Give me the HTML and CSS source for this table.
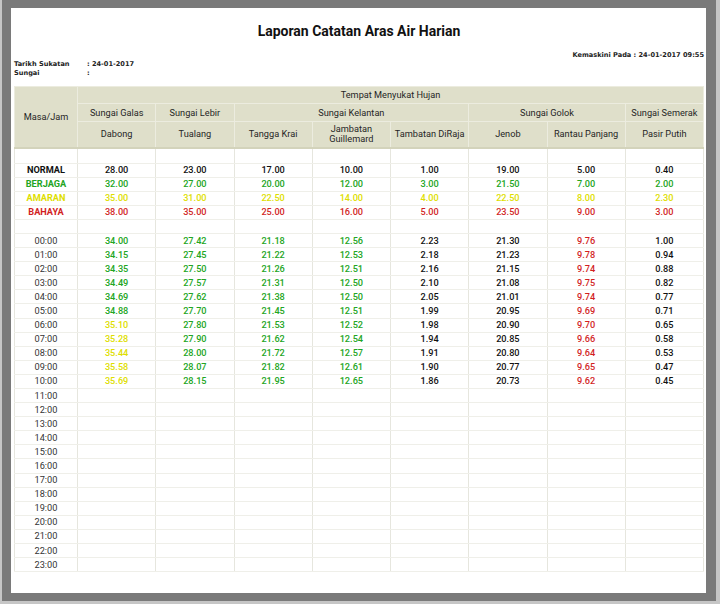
FILE: index.html
```html
<!DOCTYPE html>
<html lang="ms">
<head>
<meta charset="utf-8">
<title>Laporan Catatan Aras Air Harian</title>
<link rel="stylesheet" href="styles.css">
</head>
<body>
<div class="frame">
  <div class="page">
    <h1 class="title">Laporan Catatan Aras Air Harian</h1>
    <div class="updated">Kemaskini Pada : 24-01-2017 09:55</div>
    <div class="meta">
      <div class="meta-row"><span class="meta-label">Tarikh Sukatan</span><span>: 24-01-2017</span></div>
      <div class="meta-row"><span class="meta-label">Sungai</span><span>:</span></div>
    </div>
    <table class="report">
      <colgroup>
        <col class="c-time">
        <col><col><col><col><col><col><col><col>
      </colgroup>
      <thead>
        <tr class="h1">
          <th rowspan="3">Masa/Jam</th>
          <th colspan="8">Tempat Menyukat Hujan</th>
        </tr>
        <tr class="h2">
          <th>Sungai Galas</th>
          <th>Sungai Lebir</th>
          <th colspan="3">Sungai Kelantan</th>
          <th colspan="2">Sungai Golok</th>
          <th>Sungai Semerak</th>
        </tr>
        <tr class="h3">
          <th>Dabong</th>
          <th>Tualang</th>
          <th>Tangga Krai</th>
          <th>Jambatan<br>Guillemard</th>
          <th>Tambatan DiRaja</th>
          <th>Jenob</th>
          <th>Rantau Panjang</th>
          <th>Pasir Putih</th>
        </tr>
      </thead>
      <tbody>
        <tr class="first"><td></td><td></td><td></td><td></td><td></td><td></td><td></td><td></td><td></td></tr>
        <tr class="lvl k"><td>NORMAL</td><td>28.00</td><td>23.00</td><td>17.00</td><td>10.00</td><td>1.00</td><td>19.00</td><td>5.00</td><td>0.40</td></tr>
        <tr class="lvl g"><td>BERJAGA</td><td>32.00</td><td>27.00</td><td>20.00</td><td>12.00</td><td>3.00</td><td>21.50</td><td>7.00</td><td>2.00</td></tr>
        <tr class="lvl y"><td>AMARAN</td><td>35.00</td><td>31.00</td><td>22.50</td><td>14.00</td><td>4.00</td><td>22.50</td><td>8.00</td><td>2.30</td></tr>
        <tr class="lvl r"><td>BAHAYA</td><td>38.00</td><td>35.00</td><td>25.00</td><td>16.00</td><td>5.00</td><td>23.50</td><td>9.00</td><td>3.00</td></tr>
        <tr><td></td><td></td><td></td><td></td><td></td><td></td><td></td><td></td><td></td></tr>
        <tr><td class="t">00:00</td><td class="g">34.00</td><td class="g">27.42</td><td class="g">21.18</td><td class="g">12.56</td><td class="k">2.23</td><td class="k">21.30</td><td class="r">9.76</td><td class="k">1.00</td></tr>
        <tr><td class="t">01:00</td><td class="g">34.15</td><td class="g">27.45</td><td class="g">21.22</td><td class="g">12.53</td><td class="k">2.18</td><td class="k">21.23</td><td class="r">9.78</td><td class="k">0.94</td></tr>
        <tr><td class="t">02:00</td><td class="g">34.35</td><td class="g">27.50</td><td class="g">21.26</td><td class="g">12.51</td><td class="k">2.16</td><td class="k">21.15</td><td class="r">9.74</td><td class="k">0.88</td></tr>
        <tr><td class="t">03:00</td><td class="g">34.49</td><td class="g">27.57</td><td class="g">21.31</td><td class="g">12.50</td><td class="k">2.10</td><td class="k">21.08</td><td class="r">9.75</td><td class="k">0.82</td></tr>
        <tr><td class="t">04:00</td><td class="g">34.69</td><td class="g">27.62</td><td class="g">21.38</td><td class="g">12.50</td><td class="k">2.05</td><td class="k">21.01</td><td class="r">9.74</td><td class="k">0.77</td></tr>
        <tr><td class="t">05:00</td><td class="g">34.88</td><td class="g">27.70</td><td class="g">21.45</td><td class="g">12.51</td><td class="k">1.99</td><td class="k">20.95</td><td class="r">9.69</td><td class="k">0.71</td></tr>
        <tr><td class="t">06:00</td><td class="y">35.10</td><td class="g">27.80</td><td class="g">21.53</td><td class="g">12.52</td><td class="k">1.98</td><td class="k">20.90</td><td class="r">9.70</td><td class="k">0.65</td></tr>
        <tr><td class="t">07:00</td><td class="y">35.28</td><td class="g">27.90</td><td class="g">21.62</td><td class="g">12.54</td><td class="k">1.94</td><td class="k">20.85</td><td class="r">9.66</td><td class="k">0.58</td></tr>
        <tr><td class="t">08:00</td><td class="y">35.44</td><td class="g">28.00</td><td class="g">21.72</td><td class="g">12.57</td><td class="k">1.91</td><td class="k">20.80</td><td class="r">9.64</td><td class="k">0.53</td></tr>
        <tr><td class="t">09:00</td><td class="y">35.58</td><td class="g">28.07</td><td class="g">21.82</td><td class="g">12.61</td><td class="k">1.90</td><td class="k">20.77</td><td class="r">9.65</td><td class="k">0.47</td></tr>
        <tr><td class="t">10:00</td><td class="y">35.69</td><td class="g">28.15</td><td class="g">21.95</td><td class="g">12.65</td><td class="k">1.86</td><td class="k">20.73</td><td class="r">9.62</td><td class="k">0.45</td></tr>
        <tr><td class="t">11:00</td><td></td><td></td><td></td><td></td><td></td><td></td><td></td><td></td></tr>
        <tr><td class="t">12:00</td><td></td><td></td><td></td><td></td><td></td><td></td><td></td><td></td></tr>
        <tr><td class="t">13:00</td><td></td><td></td><td></td><td></td><td></td><td></td><td></td><td></td></tr>
        <tr><td class="t">14:00</td><td></td><td></td><td></td><td></td><td></td><td></td><td></td><td></td></tr>
        <tr><td class="t">15:00</td><td></td><td></td><td></td><td></td><td></td><td></td><td></td><td></td></tr>
        <tr><td class="t">16:00</td><td></td><td></td><td></td><td></td><td></td><td></td><td></td><td></td></tr>
        <tr><td class="t">17:00</td><td></td><td></td><td></td><td></td><td></td><td></td><td></td><td></td></tr>
        <tr><td class="t">18:00</td><td></td><td></td><td></td><td></td><td></td><td></td><td></td><td></td></tr>
        <tr><td class="t">19:00</td><td></td><td></td><td></td><td></td><td></td><td></td><td></td><td></td></tr>
        <tr><td class="t">20:00</td><td></td><td></td><td></td><td></td><td></td><td></td><td></td><td></td></tr>
        <tr><td class="t">21:00</td><td></td><td></td><td></td><td></td><td></td><td></td><td></td><td></td></tr>
        <tr><td class="t">22:00</td><td></td><td></td><td></td><td></td><td></td><td></td><td></td><td></td></tr>
        <tr><td class="t">23:00</td><td></td><td></td><td></td><td></td><td></td><td></td><td></td><td></td></tr>
      </tbody>
    </table>
  </div>
</div>
</body>
</html>
```
FILE: styles.css
```css
html {
  background: #c6c6c6;
}
body {
  margin: 0;
  font-family: Roboto, "Liberation Sans", Arial, sans-serif;
  color: #222;
}
.frame {
  margin: 0 4px 0 2px;
  height: 585px;
  border-style: solid;
  border-color: #7a7a7a;
  border-width: 8px 10px 8px 9px;
  background: #fff;
  overflow: hidden;
}
.page {
  padding: 0 2px 0 3px;
}
.title {
  margin: 0;
  padding-top: 13px;
  font-size: 14px;
  line-height: 20px;
  font-weight: bold;
  text-align: center;
  color: #111;
}
.updated {
  margin-top: 9px;
  font-family: "DejaVu Sans", Verdana, sans-serif;
  font-size: 6.6px;
  line-height: 10px;
  font-weight: bold;
  text-align: right;
  color: #222;
}
.meta {
  font-family: "DejaVu Sans", Verdana, sans-serif;
  font-size: 6.6px;
  line-height: 9px;
  font-weight: bold;
  color: #222;
}
.meta-row {
  display: flex;
}
.meta-label {
  width: 73px;
}
.report {
  margin-top: 8px;
  width: 690px;
  border-collapse: collapse;
  table-layout: fixed;
  font-size: 9.2px;
}
.c-time {
  width: 63px;
}
.report th {
  background: #dfdfca;
  border: 1px solid #ececdf;
  font-weight: normal;
  color: #262626;
  padding: 0;
  line-height: 10px;
}
.report thead tr.h1 {
  height: 17px;
}
.report thead tr.h2 {
  height: 18px;
}
.report thead tr.h3 {
  height: 26px;
}
.report thead tr.h3 th,
.report thead tr.h1 th[rowspan] {
  border-bottom: 2px solid #d3d3bb;
}
.report td {
  padding: 0;
  height: 13.1px;
  line-height: 12px;
  text-align: center;
  border-left: 1px solid #e6e6de;
  border-right: 1px solid #e6e6de;
  border-bottom: 1px solid #efefe9;
  font-weight: 500;
  white-space: nowrap;
}
.report tr.first td {
  height: 14px;
}
.report tr.lvl td:first-child {
  font-weight: bold;
}
.report td.t {
  font-weight: normal;
  color: #333;
}
.k { color: #111; }
.g { color: #22a522; }
.y { color: #dede00; }
.r { color: #d21f1f; }
```
